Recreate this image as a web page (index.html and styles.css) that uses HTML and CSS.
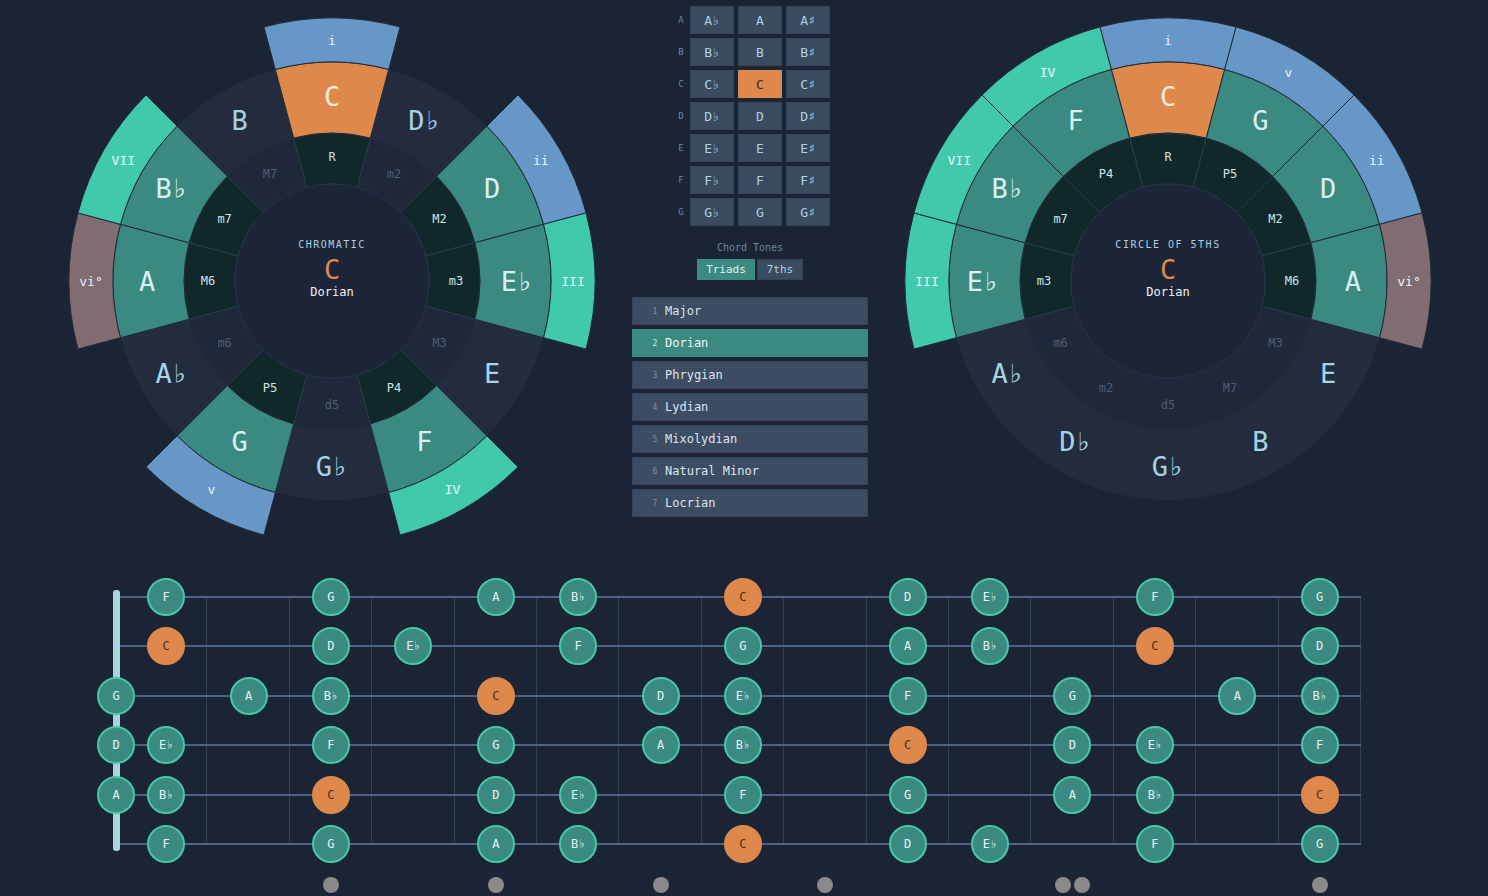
FILE: index.html
```html
<!DOCTYPE html>
<html lang="en">
<head>
  <meta charset="UTF-8" />
  <meta name="viewport" content="width=device-width, initial-scale=1.0"/>
  <title>Mode Wheel</title>
  <link rel="stylesheet" href="styles.css">
</head>
<body>

  <main class="app">
    <section class="top">
      <svg id="wheelChromatic" class="wheel" viewBox="-270 -275 540 550" data-step="1" data-title="CHROMATIC"></svg>

      <div class="controls">
        <div class="note-grid">
          <span class="row-label">A</span><button>A♭</button><button>A</button><button>A♯</button>
          <span class="row-label">B</span><button>B♭</button><button>B</button><button>B♯</button>
          <span class="row-label">C</span><button>C♭</button><button class="active">C</button><button>C♯</button>
          <span class="row-label">D</span><button>D♭</button><button>D</button><button>D♯</button>
          <span class="row-label">E</span><button>E♭</button><button>E</button><button>E♯</button>
          <span class="row-label">F</span><button>F♭</button><button>F</button><button>F♯</button>
          <span class="row-label">G</span><button>G♭</button><button>G</button><button>G♯</button>
        </div>

        <div class="chord-tones">
          <div class="caption">Chord Tones</div>
          <div class="toggle">
            <button class="active">Triads</button>
            <button>7ths</button>
          </div>
        </div>

        <ol class="modes">
          <li><span class="num">1</span>Major</li>
          <li class="active"><span class="num">2</span>Dorian</li>
          <li><span class="num">3</span>Phrygian</li>
          <li><span class="num">4</span>Lydian</li>
          <li><span class="num">5</span>Mixolydian</li>
          <li><span class="num">6</span>Natural Minor</li>
          <li><span class="num">7</span>Locrian</li>
        </ol>
      </div>

      <svg id="wheelFifths" class="wheel" viewBox="-270 -275 540 550" data-step="7" data-title="CIRCLE OF 5THS"></svg>
    </section>

    <section class="neck">
      <div class="board" id="board"></div>
      <div class="inlays" id="inlays"></div>
    </section>
  </main>

  <script src="app.js"></script>
</body>
</html>
```

FILE: styles.css
```css
html, body {
  margin: 0;
  padding: 0;
  background-color: #1b2435;
  font-family: "DejaVu Sans Mono", monospace;
  color: #dde6ee;
  overflow: hidden;
}

.app {
  padding-top: 6px;
}

.top {
  display: flex;
  align-items: flex-start;
  padding-left: 62px;
}

.wheel {
  width: 540px;
  height: 550px;
  flex-shrink: 0;
}

/* wheel rings */
.ring-notes { fill: #232c3f; }
.ring-intervals { fill: #1f283a; }
.hub { fill: #1c2537; stroke: #27324a; stroke-width: 1; }

.seg { stroke: #1f2b38; stroke-width: 1; }
.seg-interval { fill: #10282a; stroke: #2a3e47; }
.seg-note { fill: #3a8a82; }
.seg-root { fill: #de884c; }
.seg-min { fill: #6797c7; }
.seg-maj { fill: #41c9ab; }
.seg-dim { fill: #806c71; }

.wheel text {
  text-anchor: middle;
  dominant-baseline: central;
}

.lbl-note { font-size: 27px; fill: #d9f0f0; }
.lbl-note.out { fill: #a6d3e3; }
.lbl-note.root { fill: #fbeee2; }
.lbl-int { font-size: 12px; fill: #cfe3e8; }
.lbl-int.out { fill: #4d5e72; }
.lbl-deg { font-size: 13px; fill: #eef4f8; }

.hub-title { font-size: 10px; letter-spacing: 1.5px; fill: #a9d0e0; }
.hub-key { font-size: 27px; fill: #de884c; }
.hub-mode { font-size: 12px; fill: #eef2f6; }

/* middle controls */
.controls {
  width: 296px;
  flex-shrink: 0;
  display: flex;
  flex-direction: column;
  align-items: center;
}

.note-grid {
  display: grid;
  grid-template-columns: 10px repeat(3, 44px);
  gap: 4px;
  padding-left: 6px;
}

.row-label {
  align-self: center;
  text-align: center;
  font-size: 9px;
  color: #6d87a1;
}

.note-grid button {
  height: 28px;
  padding: 0;
  border: 1px solid #34435a;
  background-color: #3a4a5f;
  color: #a9d3e2;
  font-family: inherit;
  font-size: 13px;
}

.note-grid button.active {
  background-color: #de884c;
  border-color: #de884c;
  color: #3b2514;
}

.chord-tones {
  margin-top: 16px;
  display: flex;
  flex-direction: column;
  align-items: center;
}

.caption {
  font-size: 10px;
  line-height: 11px;
  color: #6a88a3;
}

.toggle {
  display: flex;
  gap: 2px;
  margin-top: 6px;
}

.toggle button {
  height: 21px;
  width: 46px;
  padding: 0;
  border: 1px solid #34435a;
  background-color: #3a4a5f;
  color: #a9d3e2;
  font-family: inherit;
  font-size: 11px;
}

.toggle button.active {
  width: 58px;
  background-color: #3a8a82;
  border-color: #3a8a82;
  color: #e4f3f0;
}

.modes {
  list-style: none;
  margin: 17px 0 0;
  padding: 0;
  width: 236px;
  display: flex;
  flex-direction: column;
  gap: 4px;
}

.modes li {
  box-sizing: border-box;
  height: 28px;
  display: flex;
  align-items: center;
  padding-left: 18px;
  background-color: #3c4c62;
  border: 1px solid #34445a;
  font-size: 12px;
  color: #dde6ee;
}

.modes li.active {
  background-color: #3a8a82;
  border-color: #3a8a82;
  color: #f0f7f6;
}

.num {
  width: 8px;
  margin-right: 6px;
  text-align: center;
  font-size: 8px;
  color: #7d92a8;
}

.modes li.active .num {
  color: #d5efe9;
}

/* fretboard */
.neck {
  margin-top: 40px;
  padding-left: 108px;
}

.board {
  position: relative;
  width: 1253px;
  height: 249px;
  display: flex;
  flex-direction: column;
  justify-content: space-between;
  background: repeating-linear-gradient(90deg, transparent 0 81.4px, #33425a 81.4px 82.4px) 17px 0 / 1236px 100% no-repeat;
}

/* nut */
.board::before {
  content: "";
  position: absolute;
  left: 5px;
  top: -6px;
  width: 7px;
  height: 261px;
  border-radius: 3px;
  background-color: #a9d3df;
}

.string,
.inlays {
  display: grid;
  grid-template-columns: 17px repeat(15, 82.4px);
}

.string {
  height: 2px;
  grid-template-rows: 2px;
  background: linear-gradient(#4c6385, #4c6385) 8px 0 / calc(100% - 8px) 100% no-repeat;
}

.cell {
  display: flex;
  justify-content: center;
  align-items: center;
}

.string .cell {
  height: 2px;
}

.string .cell:first-child {
  justify-content: flex-start;
}

.string .cell:first-child .dot {
  margin-left: -11px;
}

.dot {
  position: relative;
  z-index: 1;
  flex-shrink: 0;
  box-sizing: border-box;
  width: 38px;
  height: 38px;
  border-radius: 50%;
  background-color: #3a8a82;
  border: 2px solid #46c8a6;
  color: #e9f3f2;
  font-size: 12px;
  display: flex;
  justify-content: center;
  align-items: center;
}

.dot.root {
  background-color: #de884c;
  border-color: #de884c;
  color: #4a2c17;
}

.inlays {
  margin-top: 32px;
  height: 16px;
}

.inlays .cell {
  gap: 3px;
}

.inlay {
  width: 16px;
  height: 16px;
  border-radius: 50%;
  background-color: #8a8a8a;
}
```

FILE: app.js
```js
const NOTES = ['C', 'D♭', 'D', 'E♭', 'E', 'F', 'G♭', 'G', 'A♭', 'A', 'B♭', 'B'];
const INTERVALS = ['R', 'm2', 'M2', 'm3', 'M3', 'P4', 'd5', 'P5', 'm6', 'M6', 'm7', 'M7'];

// C Dorian: semitone -> [degree, chord quality]
const DEGREES = {
  0: ['i', 'min'],
  2: ['ii', 'min'],
  3: ['III', 'maj'],
  5: ['IV', 'maj'],
  7: ['v', 'min'],
  9: ['vi°', 'dim'],
  10: ['VII', 'maj']
};

const SVG_NS = 'http://www.w3.org/2000/svg';

function el(tag, attrs, text) {
  const node = document.createElementNS(SVG_NS, tag);
  for (const key in attrs) node.setAttribute(key, attrs[key]);
  if (text) node.textContent = text;
  return node;
}

function polar(r, deg) {
  const a = deg * Math.PI / 180;
  return [(r * Math.cos(a)).toFixed(2), (r * Math.sin(a)).toFixed(2)];
}

function arc(r1, r2, a1, a2) {
  const [x1, y1] = polar(r2, a1);
  const [x2, y2] = polar(r2, a2);
  const [x3, y3] = polar(r1, a2);
  const [x4, y4] = polar(r1, a1);
  return `M${x1} ${y1}A${r2} ${r2} 0 0 1 ${x2} ${y2}L${x3} ${y3}A${r1} ${r1} 0 0 0 ${x4} ${y4}Z`;
}

function label(r, deg, cls, text) {
  const [x, y] = polar(r, deg);
  return el('text', { x, y, class: cls }, text);
}

function drawWheel(svg) {
  const step = Number(svg.dataset.step);
  const segs = el('g', {});
  const texts = el('g', {});

  svg.append(el('circle', { r: 219, class: 'ring-notes' }));
  svg.append(el('circle', { r: 148, class: 'ring-intervals' }));

  for (let i = 0; i < 12; i++) {
    const semi = (i * step) % 12;
    const mid = -90 + i * 30;
    const a1 = mid - 15;
    const a2 = mid + 15;
    const degree = DEGREES[semi];

    if (degree) {
      segs.append(el('path', { d: arc(97, 148, a1, a2), class: 'seg seg-interval' }));
      segs.append(el('path', { d: arc(148, 219, a1, a2), class: 'seg ' + (semi === 0 ? 'seg-root' : 'seg-note') }));
      segs.append(el('path', { d: arc(219, 263, a1, a2), class: 'seg seg-' + degree[1] }));
      texts.append(label(241, mid, 'lbl-deg', degree[0]));
    }

    const out = degree ? '' : ' out';
    const root = semi === 0 ? ' root' : '';
    texts.append(label(124, mid, 'lbl-int' + out, INTERVALS[semi]));
    texts.append(label(185, mid, 'lbl-note' + out + root, NOTES[semi]));
  }

  svg.append(segs);
  svg.append(el('circle', { r: 97, class: 'hub' }));
  svg.append(texts);
  svg.append(el('text', { x: 0, y: -37, class: 'hub-title' }, svg.dataset.title));
  svg.append(el('text', { x: 0, y: -12, class: 'hub-key' }, 'C'));
  svg.append(el('text', { x: 0, y: 11, class: 'hub-mode' }, 'Dorian'));
}

document.querySelectorAll('.wheel').forEach(drawWheel);

// fretboard: high E on top, semitones above C
const TUNING = [4, 11, 7, 2, 9, 4];
const FRETS = 15;
const board = document.getElementById('board');

TUNING.forEach(open => {
  const row = document.createElement('div');
  row.className = 'string';
  for (let fret = 0; fret <= FRETS; fret++) {
    const semi = (open + fret) % 12;
    const cell = document.createElement('div');
    cell.className = 'cell';
    if (DEGREES[semi]) {
      const dot = document.createElement('span');
      dot.className = semi === 0 ? 'dot root' : 'dot';
      dot.textContent = NOTES[semi];
      cell.append(dot);
    }
    row.append(cell);
  }
  board.append(row);
});

const INLAYS = { 3: 1, 5: 1, 7: 1, 9: 1, 12: 2, 15: 1 };
const inlays = document.getElementById('inlays');

for (let fret = 0; fret <= FRETS; fret++) {
  const cell = document.createElement('div');
  cell.className = 'cell';
  for (let n = 0; n < (INLAYS[fret] || 0); n++) {
    const mark = document.createElement('span');
    mark.className = 'inlay';
    cell.append(mark);
  }
  inlays.append(cell);
}
```
